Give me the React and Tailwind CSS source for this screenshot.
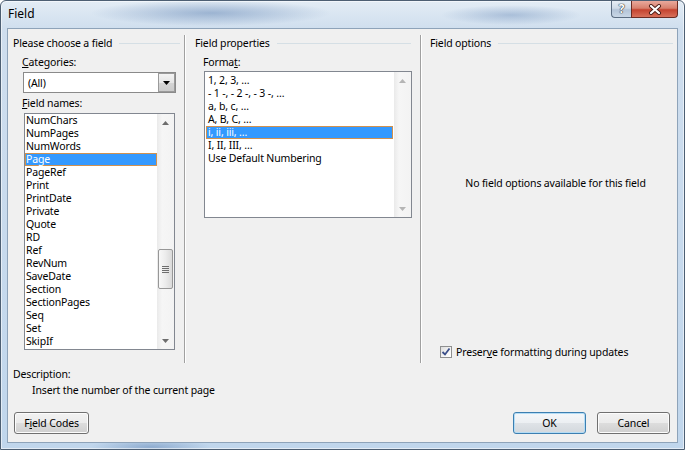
import React from "react";

const fieldNames = ["NumChars","NumPages","NumWords","Page","PageRef","Print","PrintDate","Private","Quote","RD","Ref","RevNum","SaveDate","Section","SectionPages","Seq","Set","SkipIf"];
const formats = ["1, 2, 3, …","- 1 -, - 2 -, - 3 -, …","a, b, c, …","A, B, C, …","i, ii, iii, …","I, II, III, …","Use Default Numbering"];

function Arrow({ up, color }) {
  return (
    <svg width="7" height="4" viewBox="0 0 7 4">
      <path d={up ? "M0 4 L3.5 0 L7 4 Z" : "M0 0 L7 0 L3.5 4 Z"} fill={color} />
    </svg>
  );
}

function Heading({ children }) {
  return (
    <div className="flex items-center h-[14px] leading-[14px]">
      <span className="whitespace-nowrap">{children}</span>
      <div className="ml-[7px] flex-1 h-px bg-[#d5dfe5]" />
    </div>
  );
}

function Sep() {
  return (
    <div className="flex mt-[6px]">
      <div className="w-px bg-[#a0a0a0]" />
      <div className="w-px bg-white" />
    </div>
  );
}

function Button({ children, def, className }) {
  return (
    <div
      className={
        "h-[22px] rounded-[3px] border flex items-center justify-center leading-[14px] " +
        (def
          ? "border-[#3c7fb1] shadow-[inset_0_0_0_1px_#b4dcf5] bg-[linear-gradient(180deg,#f4f7fa_0%,#eceff2_50%,#dfe3e7_50%,#d3d8dd_100%)] "
          : "border-[#707070] shadow-[inset_0_0_0_1px_#fcfcfc] bg-[linear-gradient(180deg,#f2f2f2_0%,#ebebeb_50%,#dddddd_50%,#cfcfcf_100%)] ") +
        className
      }
    >
      {children}
    </div>
  );
}

export default function App() {
  return (
    <div className="w-[685px] h-[450px] bg-white font-['Noto_Sans',sans-serif] text-[10.5px] tracking-[-0.15px] text-black">
      <div className="w-full h-full flex flex-col rounded-t-[6px] border border-[#4d5f73] shadow-[inset_0_0_0_1px_rgba(255,255,255,0.55)] bg-[radial-gradient(ellipse_120px_13px_at_210px_12px,rgba(70,110,165,0.42),transparent),radial-gradient(ellipse_70px_10px_at_510px_14px,rgba(70,110,165,0.32),transparent),radial-gradient(ellipse_60px_8px_at_150px_446px,rgba(70,110,165,0.4),transparent),linear-gradient(180deg,#e3ecf5_0px,#cfdeee_28px,#c0d6ec_100%)]">
        {/* title bar */}
        <div className="h-[27px] flex items-start">
          <span className="ml-[7px] mt-[5px] text-[12px] tracking-normal leading-[16px]">Field</span>
          <div className="ml-auto mr-[6px] flex">
            <div className="w-[20px] h-[17px] border border-t-0 border-r-0 border-[#5b6d82] rounded-bl-[4px] bg-[linear-gradient(180deg,#e6edf5_0%,#cfdbe8_45%,#b3c4d8_55%,#c9d7e6_100%)] flex items-center justify-center">
              <span className="text-white font-bold text-[12px] leading-[12px] [text-shadow:0_0_1px_#333,0_0_1px_#333,0_0_1px_#333]">?</span>
            </div>
            <div className="w-[47px] h-[17px] border border-t-0 border-[#6b2b22] rounded-br-[4px] bg-[linear-gradient(180deg,#e9a99c_0%,#d7806d_45%,#c4432f_55%,#d8705a_100%)] flex items-center justify-center">
              <svg width="14" height="11" viewBox="0 0 14 11">
                <path d="M3 2 L11 9 M11 2 L3 9" stroke="#4a1c16" strokeWidth="4" strokeLinecap="round" />
                <path d="M3 2 L11 9 M11 2 L3 9" stroke="#ffffff" strokeWidth="2.2" strokeLinecap="round" />
              </svg>
            </div>
          </div>
        </div>

        {/* client */}
        <div className="mx-[6px] mb-[6px] flex-1 border border-[#8ea3b9] bg-[#f0f0f0] flex flex-col">
          <div className="h-[334px] flex">
            {/* column 1 */}
            <div className="w-[176px] flex flex-col">
              <div className="mt-[7px] pl-[5px] pr-[4px]">
                <Heading>Please choose a field</Heading>
              </div>
              <div className="mt-[5px] pl-[14px] leading-[14px] h-[14px]">
                <span className="underline">C</span>ategories:
              </div>
              <div className="mt-[3px] ml-[15px] w-[153px] h-[21px] border border-[#8a8a8a] bg-white flex items-center">
                <span className="pl-[4px] flex-1 leading-[14px]">(All)</span>
                <div className="w-[17px] h-[19px] border border-[#9a9a9a] bg-[linear-gradient(180deg,#f3f3f3_0%,#e6e6e6_50%,#d5d5d5_51%,#cbcbcb_100%)] flex items-center justify-center">
                  <Arrow color="#000" />
                </div>
              </div>
              <div className="mt-[3px] pl-[14px] leading-[14px] h-[14px]">
                <span className="underline">F</span>ield names:
              </div>
              <div className="mt-[3px] ml-[16px] w-[151px] h-[237px] border border-[#828790] bg-white flex">
                <div className="w-[132px] flex flex-col">
                  {fieldNames.map((n) => (
                    <div
                      key={n}
                      className={
                        "h-[13px] leading-[13px] pl-[1px] whitespace-nowrap " +
                        (n === "Page" ? "bg-[#3399ff] text-white shadow-[inset_0_0_0_1px_#d0914f]" : "")
                      }
                    >
                      {n}
                    </div>
                  ))}
                </div>
                <div className="w-[17px] flex flex-col bg-[linear-gradient(90deg,#eaeaea_0%,#f6f6f6_30%,#f3f3f3_100%)]">
                  <div className="h-[17px] flex items-center justify-center">
                    <Arrow up color="#6d6d6d" />
                  </div>
                  <div className="mt-[118px] mx-[1px] h-[40px] border border-[#979797] rounded-[2px] bg-[linear-gradient(90deg,#f8f8f8_0%,#ececec_50%,#dadada_100%)] flex flex-col items-center justify-center gap-[1px]">
                    <div className="w-[7px] h-px bg-[#6e6e6e]" />
                    <div className="w-[7px] h-px bg-[#6e6e6e]" />
                    <div className="w-[7px] h-px bg-[#6e6e6e]" />
                    <div className="w-[7px] h-px bg-[#6e6e6e]" />
                  </div>
                  <div className="mt-auto h-[17px] flex items-center justify-center">
                    <Arrow color="#6d6d6d" />
                  </div>
                </div>
              </div>
            </div>

            <Sep />

            {/* column 2 */}
            <div className="w-[234px] flex flex-col">
              <div className="mt-[7px] pl-[9px] pr-[9px]">
                <Heading>Field properties</Heading>
              </div>
              <div className="mt-[5px] pl-[17px] leading-[14px] h-[14px]">
                Forma<span className="underline">t</span>:
              </div>
              <div className="mt-[2px] ml-[18px] w-[208px] h-[147px] border border-[#828790] bg-white flex">
                <div className="flex-1 flex flex-col px-[1px] pt-[2px]">
                  {formats.map((n) => (
                    <div
                      key={n}
                      className={
                        "h-[13px] leading-[13px] pl-[2px] whitespace-nowrap " +
                        (n === "i, ii, iii, …" ? "bg-[#3399ff] text-white shadow-[inset_0_0_0_1px_#d0914f]" : "")
                      }
                    >
                      {n}
                    </div>
                  ))}
                </div>
                <div className="w-[17px] flex flex-col bg-[linear-gradient(90deg,#eaeaea_0%,#f6f6f6_30%,#f3f3f3_100%)]">
                  <div className="h-[17px] flex items-center justify-center">
                    <Arrow up color="#b5b5b5" />
                  </div>
                  <div className="mt-auto h-[17px] flex items-center justify-center">
                    <Arrow color="#b5b5b5" />
                  </div>
                </div>
              </div>
            </div>

            <Sep />

            {/* column 3 */}
            <div className="flex-1 flex flex-col">
              <div className="mt-[7px] pl-[8px] pr-[4px]">
                <Heading>Field options</Heading>
              </div>
              <div className="mt-[126px] pl-[12px] text-center leading-[14px] h-[14px]">
                No field options available for this field
              </div>
              <div className="mt-[155px] ml-[18px] flex items-center h-[14px]">
                <div className="w-[12px] h-[12px] border border-[#8e8f8f] bg-[linear-gradient(135deg,#dcdcdc_0%,#f6f6f6_60%,#ffffff_100%)] flex items-center justify-center">
                  <svg width="10" height="10" viewBox="0 0 10 10">
                    <path d="M1.5 5 L4 7.5 L8.5 1.5" stroke="#3b4f8a" strokeWidth="1.8" fill="none" />
                  </svg>
                </div>
                <span className="ml-[4px] leading-[14px]">
                  Preser<span className="underline">v</span>e formatting during updates
                </span>
              </div>
            </div>
          </div>

          <div className="mt-[4px] pl-[5px] leading-[14px] h-[14px]">Description:</div>
          <div className="mt-[2px] pl-[24px] leading-[14px] h-[14px]">Insert the number of the current page</div>

          <div className="mt-[15px] flex">
            <Button className="ml-[6px] w-[75px]">
              F<span className="underline">i</span>eld Codes
            </Button>
            <Button def className="ml-auto w-[73px]">OK</Button>
            <Button className="ml-[11px] mr-[7px] w-[73px]">Cancel</Button>
          </div>
        </div>
      </div>
    </div>
  );
}
